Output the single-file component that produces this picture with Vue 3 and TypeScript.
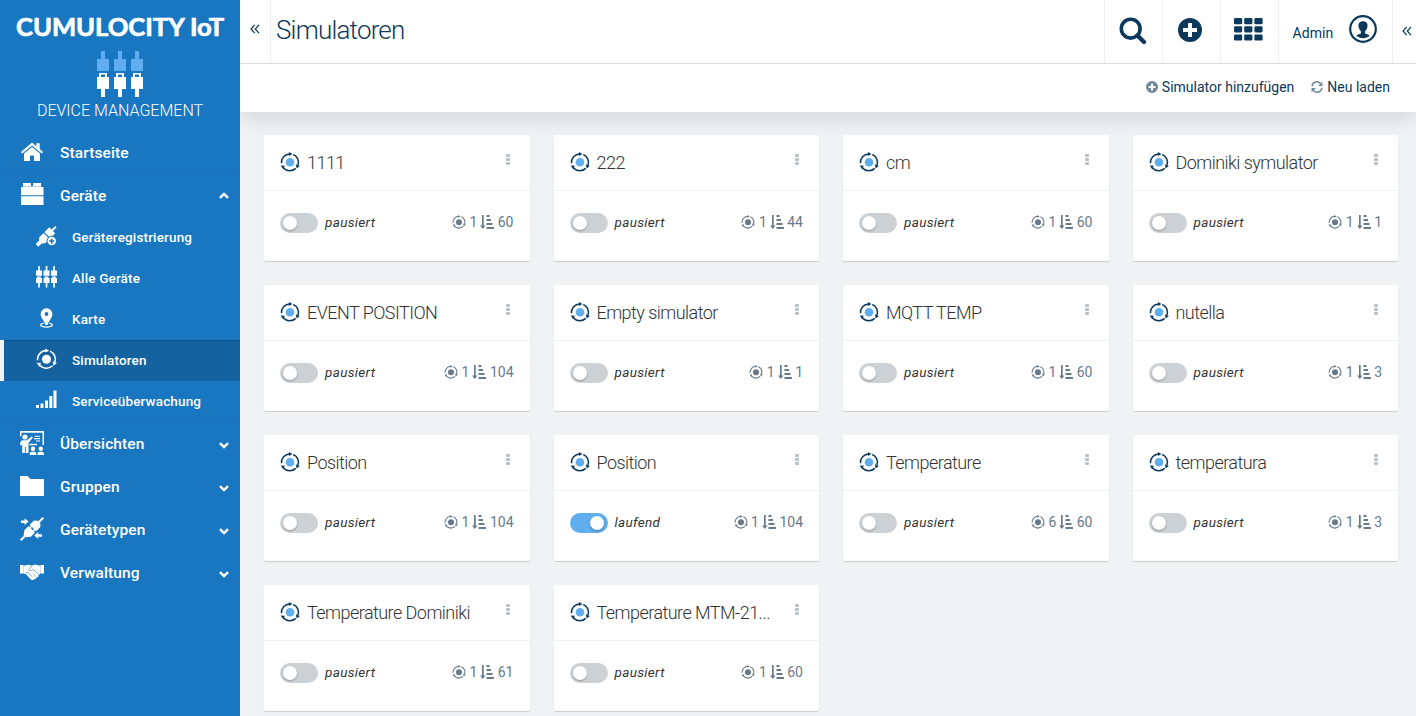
<script setup lang="ts">
interface Child { label: string; icon: string; active?: boolean }
interface NavItem { label: string; icon: string; arrow?: 'up' | 'down'; children?: Child[] }
interface Simulator { name: string; instances: number; steps: number; running?: boolean }

const nav: NavItem[] = [
  { label: 'Startseite', icon: 'home' },
  {
    label: 'Geräte', icon: 'brick', arrow: 'up',
    children: [
      { label: 'Geräteregistrierung', icon: 'register' },
      { label: 'Alle Geräte', icon: 'plugs' },
      { label: 'Karte', icon: 'pin' },
      { label: 'Simulatoren', icon: 'sim', active: true },
      { label: 'Serviceüberwachung', icon: 'signal' },
    ],
  },
  { label: 'Übersichten', icon: 'board', arrow: 'down' },
  { label: 'Gruppen', icon: 'folder', arrow: 'down' },
  { label: 'Gerätetypen', icon: 'types', arrow: 'down' },
  { label: 'Verwaltung', icon: 'hands', arrow: 'down' },
]

const simulators: Simulator[] = [
  { name: '1111', instances: 1, steps: 60 },
  { name: '222', instances: 1, steps: 44 },
  { name: 'cm', instances: 1, steps: 60 },
  { name: 'Dominiki symulator', instances: 1, steps: 1 },
  { name: 'EVENT POSITION', instances: 1, steps: 104 },
  { name: 'Empty simulator', instances: 1, steps: 1 },
  { name: 'MQTT TEMP', instances: 1, steps: 60 },
  { name: 'nutella', instances: 1, steps: 3 },
  { name: 'Position', instances: 1, steps: 104 },
  { name: 'Position', instances: 1, steps: 104, running: true },
  { name: 'Temperature', instances: 6, steps: 60 },
  { name: 'temperatura', instances: 1, steps: 3 },
  { name: 'Temperature Dominiki', instances: 1, steps: 61 },
  { name: 'Temperature MTM-21...', instances: 1, steps: 60 },
]
</script>

<template>
  <div class="app">
    <svg class="sprite" width="0" height="0" aria-hidden="true">
      <symbol id="home" viewBox="0 0 24 24">
        <path d="M12 2.600 0.900 12l1.400 1.600L12 5.400l9.700 8.200 1.400-1.600-3.400-2.900V3.200h-3.400v3z" />
        <path d="M12 6.900 4 13.600V21h6v-5.400h4V21h6v-7.400z" />
      </symbol>
      <symbol id="brick" viewBox="0 0 24 24">
        <path d="M3 1h8v3H3zM13 1h8v3h-8zM1 5h22.500v8.300H1zM1 14.300h22.500V23H1z" />
        <path d="M3 4h18v1H3z" opacity=".7" />
      </symbol>
      <symbol id="register" viewBox="0 0 22 22">
        <g transform="rotate(45 11 11)">
          <path d="M10-3h2v5.500h3.400v7.200H6.600V2.500H10zM6.600 10.900h8.800v6.400L13 20v5H9v-5l-2.400-2.700z" />
        </g>
        <circle cx="16.500" cy="16.300" r="5.500" class="cut" />
        <path fill-rule="evenodd" d="M16.500 11.800a4.500 4.500 0 1 0 0 9 4.500 4.500 0 0 0 0-9zm-.8 1.800h1.600v1.900h1.900v1.600h-1.900V19h-1.600v-1.900h-1.900v-1.600h1.900z" />
      </symbol>
      <symbol id="plugs" viewBox="0 0 21 22">
        <path d="M2.200 0h1.700v4.500H6V9.700H0V4.500h2.200zM9.700 0h1.700v4.500h2.100v5.200h-6V4.500h2.200zM17.200 0h1.700v4.500H21v5.200h-6V4.500h2.200z" />
        <path d="M1.200 10.500h3.600V12H6v5H3.900v4.500H2.200V17H0v-5h1.200zM8.700 10.500h3.600V12h1.200v5h-2.100v4.500H9.700V17H7.500v-5h1.200zM16.200 10.500h3.600V12H21v5h-2.100v4.500h-1.700V17H15v-5h1.200z" />
      </symbol>
      <symbol id="pin" viewBox="0 0 22 22">
        <path fill-rule="evenodd" d="M11 .7a6.200 6.200 0 0 0-6.200 6.200c0 4.200 4.100 7.300 5.200 11.500h2c1.100-4.200 5.200-7.300 5.200-11.500A6.200 6.200 0 0 0 11 .7zm0 4.100a2 2 0 1 1 0 4 2 2 0 0 1 0-4z" />
        <path d="M8.300 16.500c-5 .5-4.800 4 2.700 4s7.700-3.500 2.700-4" fill="none" stroke="currentColor" stroke-width="1.300" />
      </symbol>
      <symbol id="sim" viewBox="0 0 20 20">
        <g fill="none" stroke="currentColor" stroke-width="1.500">
          <path d="M1.500 11.200A8.500 8.500 0 0 1 9.800 1.900" />
          <path d="M13.300 2.500A8.500 8.500 0 0 1 18 13.100" />
          <path d="M15.700 16.400A8.500 8.500 0 0 1 3.500 15.900" />
        </g>
        <path d="M8.900 0v3.900l3.600-1.800zM15.900 12.200l4 1.700-3.300 2.600zM.7 13.600l4.100.1-1.500 3.800z" />
        <circle cx="10" cy="10.200" r="4.300" class="dot" />
      </symbol>
      <symbol id="signal" viewBox="0 0 21 20">
        <path d="M0 15h3v3H0zM4.500 13.500h3V18h-3zM9 10.500h3V18H9zM13.300 6h3v12h-3zM17.500 0.500h3V18h-3z" />
      </symbol>
      <symbol id="board" viewBox="0 0 24 24">
        <path d="M0 0h24v14h-1.500V1.800H1.500v3.500H0zM9.500 12.700H17v1.500H9.500zM14.500 4.700H20v1.100h-5.500zM14 7.100h6v1.100h-6zM16 9.500h4v1.100h-4z" />
        <circle cx="5" cy="6" r="2.600" />
        <path d="M0 14c0-3 1-4.700 3-4.700h4l4.800-4 1.100 1.300L8.500 12v10H5.800v-6h-.9v6H2.200v-9.600l-.5 2.200z" />
        <circle cx="13" cy="17.700" r="2.200" /><circle cx="20.800" cy="17.700" r="2.200" />
        <path d="M9.700 24v-1.300q0-2 2.300-2h2q2.300 0 2.300 2V24zM17.500 24v-1.300q0-2 2.300-2h1.900q2.300 0 2.300 2V24z" />
      </symbol>
      <symbol id="folder" viewBox="0 0 24 24"><path d="M0 2h7.500l3 3H24v17H0z" /></symbol>
      <symbol id="types" viewBox="0 0 24 24">
        <g transform="rotate(45 12 12)">
          <path d="M11-4h2v6.500h1.500L16.600 5v5.700H7.400V5l2.100-2.500H11z" />
          <path d="M7.400 12.300h9.200v6L14.300 21v1H13v6h-2v-6H9.700v-1l-2.300-2.700z" />
          <path d="M9 10h1.500v3H9zM13.500 10H15v3h-1.500z" />
        </g>
        <path d="M1 3.400h3.600V1.200l4 3.400-4 3.500V5.900H1zM22 19.800h-3.800V22l-4-3.500 4-3.500v2.200H22z" />
      </symbol>
      <symbol id="hands" viewBox="0 0 24 24">
        <path d="M0 4h3.600v8.500H0zM20.400 4H24v8.500h-3.600z" />
        <path d="m3.600 4.800 4.700-1 3.200.6 3.500-.8 5.400 1.200v7.400l-2 2.300c.3 1.500-.9 2-1.800 1.800-.2 1.500-1.300 2-2.300 1.600-.8 1.300-2.300 1.600-3.500.6L5.600 12.800h-2z" />
        <path d="M12.600 4.500 8.800 8c-.7 2 2 2.400 4.300.2l5.500 5.300M13.200 12.800l3 2.900M5.900 12.300l1.700-1.200 4.500 4.500" class="crease" />
      </symbol>
      <symbol id="search" viewBox="0 0 28 28">
        <circle cx="11.700" cy="11.700" r="9.400" fill="none" stroke="currentColor" stroke-width="3.600" />
        <path d="m18.500 18.500 6.500 6.500" fill="none" stroke="currentColor" stroke-width="4.300" stroke-linecap="round" />
      </symbol>
      <symbol id="plus" viewBox="0 0 24 24">
        <path fill-rule="evenodd" d="M12 0a12 12 0 1 0 0 24 12 12 0 0 0 0-24zM10 5h4v5h5v4h-5v5h-4v-5H5v-4h5z" />
      </symbol>
      <symbol id="refresh" viewBox="0 0 14 14">
        <path d="M1.300 6.200A5.600 5.600 0 0 1 11.200 3M12.700 7.800A5.600 5.600 0 0 1 2.800 11" fill="none" stroke="currentColor" stroke-width="1.800" />
        <path d="M13.300.8v5H8.200zM.7 13.200v-5h5.100z" />
      </symbol>
      <symbol id="steps" viewBox="0 0 14 14">
        <path d="M2 0h1.700v10.500h1.800L2.800 14 .1 10.500H2zM6.500 0h3v2h-3zM6.500 4h4.500v2H6.500zM6.500 8h6v2h-6zM6.500 12H14v2H6.500z" />
      </symbol>
      <symbol id="chevron" viewBox="0 0 10 7">
        <path d="m1 1.200 4 3.900 4-3.900" fill="none" stroke="currentColor" stroke-width="2.500" />
      </symbol>
      <symbol id="double" viewBox="0 0 10 10">
        <path d="M4.700.8 1 5l3.700 4.200M9 .8 5.300 5 9 9.200" fill="none" stroke="currentColor" stroke-width="1.200" />
      </symbol>
    </svg>

    <aside class="sidebar">
      <div class="brand">
        <svg class="wordmark" width="240" height="50">
          <text x="16" y="36" textLength="208" lengthAdjust="spacingAndGlyphs">CUMULOCITY IoT</text>
        </svg>
        <svg class="brand-icon" width="48" height="48" viewBox="0 0 48 48">
          <path class="pale" d="M5 1h4v8h4v12H1V9h4zM22 1h4v8h4v12H18V9h4zM39 1h4v8h4v12H35V9h4z" />
          <path fill-rule="evenodd" d="M3 23h8v4h2v12H9v8H5v-8H1V27h2zm2 1.500V27h4v-2.500zM20 23h8v4h2v12h-4v8h-4v-8h-4V27h2zm2 1.500V27h4v-2.500zM37 23h8v4h2v12h-4v8h-4v-8h-4V27h2zm2 1.500V27h4v-2.500z" />
        </svg>
        <div class="product">DEVICE MANAGEMENT</div>
      </div>
      <nav>
        <div v-for="item in nav" :key="item.label" class="group">
          <div class="item">
            <svg class="nav-icon" :class="item.icon"><use :href="'#' + item.icon" /></svg>
            <span>{{ item.label }}</span>
            <svg v-if="item.arrow" class="arrow" :class="item.arrow"><use href="#chevron" /></svg>
          </div>
          <div v-for="child in item.children" :key="child.label" class="child" :class="{ active: child.active }">
            <svg class="child-icon"><use :href="'#' + child.icon" /></svg>
            <span>{{ child.label }}</span>
          </div>
        </div>
      </nav>
    </aside>

    <div class="main">
      <header class="topbar">
        <div class="collapse"><svg class="double"><use href="#double" /></svg></div>
        <h1>Simulatoren</h1>
        <div class="tool"><svg class="search"><use href="#search" /></svg></div>
        <div class="tool"><svg class="add"><use href="#plus" /></svg></div>
        <div class="tool apps">
          <svg width="29" height="23" viewBox="0 0 29 23">
            <template v-for="r in 3" :key="r">
              <rect v-for="c in 3" :key="c" :x="(c - 1) * 10.200" :y="(r - 1) * 8.200" width="8.200" height="6.200" rx="1.300" />
            </template>
          </svg>
        </div>
        <div class="user">
          <span>Admin</span>
          <svg width="28" height="28" viewBox="0 0 28 28">
            <circle cx="14" cy="14" r="12.800" fill="none" stroke="currentColor" stroke-width="2.200" />
            <path d="M14 6.300c-3.300 0-4.800 2.200-4.500 5 .2 2.200 1.300 4 2.400 4.900v2.400c-1.800.6-3.800 1-4.600 2.200 3.500 3.100 9.900 3.100 13.400 0-.8-1.200-2.800-1.600-4.600-2.200v-2.400c1.100-.9 2.200-2.700 2.400-4.900.3-2.800-1.200-5-4.500-5z" />
          </svg>
        </div>
        <div class="drawer"><svg class="double"><use href="#double" /></svg></div>
      </header>
      <div class="actions">
        <div class="action"><svg class="act-add"><use href="#plus" /></svg>Simulator hinzufügen</div>
        <div class="action"><svg class="act-reload"><use href="#refresh" /></svg>Neu laden</div>
      </div>
      <main class="grid">
        <article v-for="(s, i) in simulators" :key="i" class="card">
          <div class="card-head">
            <svg class="sim-icon"><use href="#sim" /></svg>
            <h2>{{ s.name }}</h2>
            <div class="more"><i /><i /><i /></div>
          </div>
          <div class="card-body">
            <div class="switch" :class="{ on: s.running }"><i /></div>
            <em>{{ s.running ? 'laufend' : 'pausiert' }}</em>
            <div class="stats">
              <svg class="count-icon"><use href="#sim" /></svg><span>{{ s.instances }}</span>
              <svg class="steps-icon"><use href="#steps" /></svg><span>{{ s.steps }}</span>
            </div>
          </div>
        </article>
      </main>
    </div>
  </div>
</template>

<style>
body { margin: 0; overflow: hidden; }
</style>

<style scoped>
* { box-sizing: border-box; }
.app {
  display: flex;
  width: 100%;
  height: 716px;
  overflow: hidden;
  background: #f1f2f4;
  font-family: Roboto, "Liberation Sans", sans-serif;
  font-size: 14px;
}
svg { display: block; fill: currentColor; flex: none; }
.sprite { position: absolute; }

.sidebar { width: 240px; flex: none; background: #1976c0; color: #fff; }
.brand { height: 131px; display: flex; flex-direction: column; align-items: center; }
.wordmark text { font-family: Lato, "Open Sans", sans-serif; font-weight: 700; font-size: 25.500px; stroke: currentColor; stroke-width: .7px; }
.pale { fill: #61aeee; }
.product { font-size: 16px; line-height: 20px; margin-top: 3px; font-weight: 300; }
.item { height: 43px; display: flex; align-items: center; padding: 1px 11px 0 20px; font-size: 15.500px; font-weight: 500; letter-spacing: .1px; }
.nav-icon { width: 24px; height: 24px; margin: -3px 16px 0 0; }
.nav-icon.hands { margin-top: 0; }
.nav-icon.brick { margin-top: -4px; }
.crease { fill: none; stroke: #1976c0; stroke-width: .6; }
.arrow { width: 10px; height: 7px; margin: 3px 0 0 auto; }
.arrow.up { transform: rotate(180deg); margin-top: -1px; }
.child { height: 41px; display: flex; align-items: center; padding-left: 36px; font-size: 13.500px; font-weight: 500; letter-spacing: .15px; }
.child span { margin-top: -2px; }
.child-icon { width: 21px; height: 22px; margin: -3px 15px 0 0; }
.cut { fill: #1976c0; }
.child.active { background: #1562a0; padding-left: 32px; border-left: 4px solid #f1f2f4; box-shadow: inset 0 1px 1px rgba(0, 0, 0, .15); }
.group:nth-child(2) { height: 248px; box-shadow: inset 0 1px #1873bb, inset 0 -1px #1873bb; }

.main { flex: 1; min-width: 0; color: #0b385b; overflow: hidden; }
.topbar { position: relative; z-index: 2; height: 64px; display: flex; background: #fff; border-bottom: 1px solid #d9dbdd; }
.collapse { width: 31px; border-right: 1px solid #f0f1f2; padding: 24px 0 0 10px; }
.double { width: 10px; height: 10px; }
h1 { margin: 0; flex: 1; padding-left: 5px; font-size: 26px; font-weight: 300; line-height: 60px; letter-spacing: -.8px; }
.tool { width: 58px; border-left: 1px solid #f0f1f2; padding-left: 14px; }
.search { width: 28px; height: 28px; margin-top: 17px; }
.add { width: 24px; height: 24px; margin: 18px 0 0 1px; }
.apps { padding: 18px 0 0 13px; }
.user { width: 114px; border-left: 1px solid #f0f1f2; display: flex; padding: 15px 0 0 13.500px; }
.user span { width: 56.500px; line-height: 37px; letter-spacing: .1px; }
.drawer { width: 24px; border-left: 1px solid #f0f1f2; padding: 26px 0 0 9px; }
.actions {
  position: relative;
  height: 48px;
  background: #fff;
  display: flex;
  justify-content: flex-end;
  align-items: center;
  gap: 17px;
  padding: 0 26px 2px 0;
  box-shadow: 0 4px 24px rgba(0, 0, 0, .14);
}
.action { display: flex; align-items: center; }
.action svg { color: #6d879c; margin-right: 4px; width: 12px; height: 12px; }
.grid { display: grid; grid-template-columns: repeat(4, 265.500px); grid-auto-rows: 126px; gap: 24px; padding: 23px 18px 0 24px; }
.card { background: #fff; border-radius: 2px; box-shadow: 0 1px 1px rgba(0, 0, 0, .16); }
.card-head { height: 56px; border-bottom: 1px solid #eff0f1; display: flex; align-items: center; padding: 0 20px 0 16px; }
.sim-icon { --dot: #5faeee; width: 20px; height: 20px; margin: -2px 7px 0 0; }
.dot { fill: var(--dot, currentColor); }
h2 { margin: 0; font-size: 18px; font-weight: 300; line-height: 24px; color: #333; letter-spacing: -.54px; white-space: nowrap; }
.more { margin: -7px 0 0 auto; display: grid; gap: 1px; }
.more i { width: 4px; height: 3px; background: #b9c0c6; border-radius: 1px; }
.card-body { height: 70px; display: flex; align-items: flex-start; padding: 22px 16px 0; }
.switch { width: 38px; height: 20px; border-radius: 10px; background: #ccd1d5; padding: 3px; }
.switch i { display: block; width: 14px; height: 14px; border-radius: 50%; background: #fff; box-shadow: 0 1px 2px rgba(0, 0, 0, .3); }
.switch.on { background: #5faeee; }
.switch.on i { margin-left: 17px; }
em { margin: -1px 0 0 7px; line-height: 20px; font-size: 13.500px; color: #333; letter-spacing: .33px; }
.stats { margin: -1px 0 0 auto; display: flex; align-items: center; line-height: 20px; color: #687a89; }
.count-icon { width: 14px; height: 14px; margin-right: 3.500px; }
.steps-icon { width: 14px; height: 14px; margin: 0 3.500px 0 3px; }
</style>
